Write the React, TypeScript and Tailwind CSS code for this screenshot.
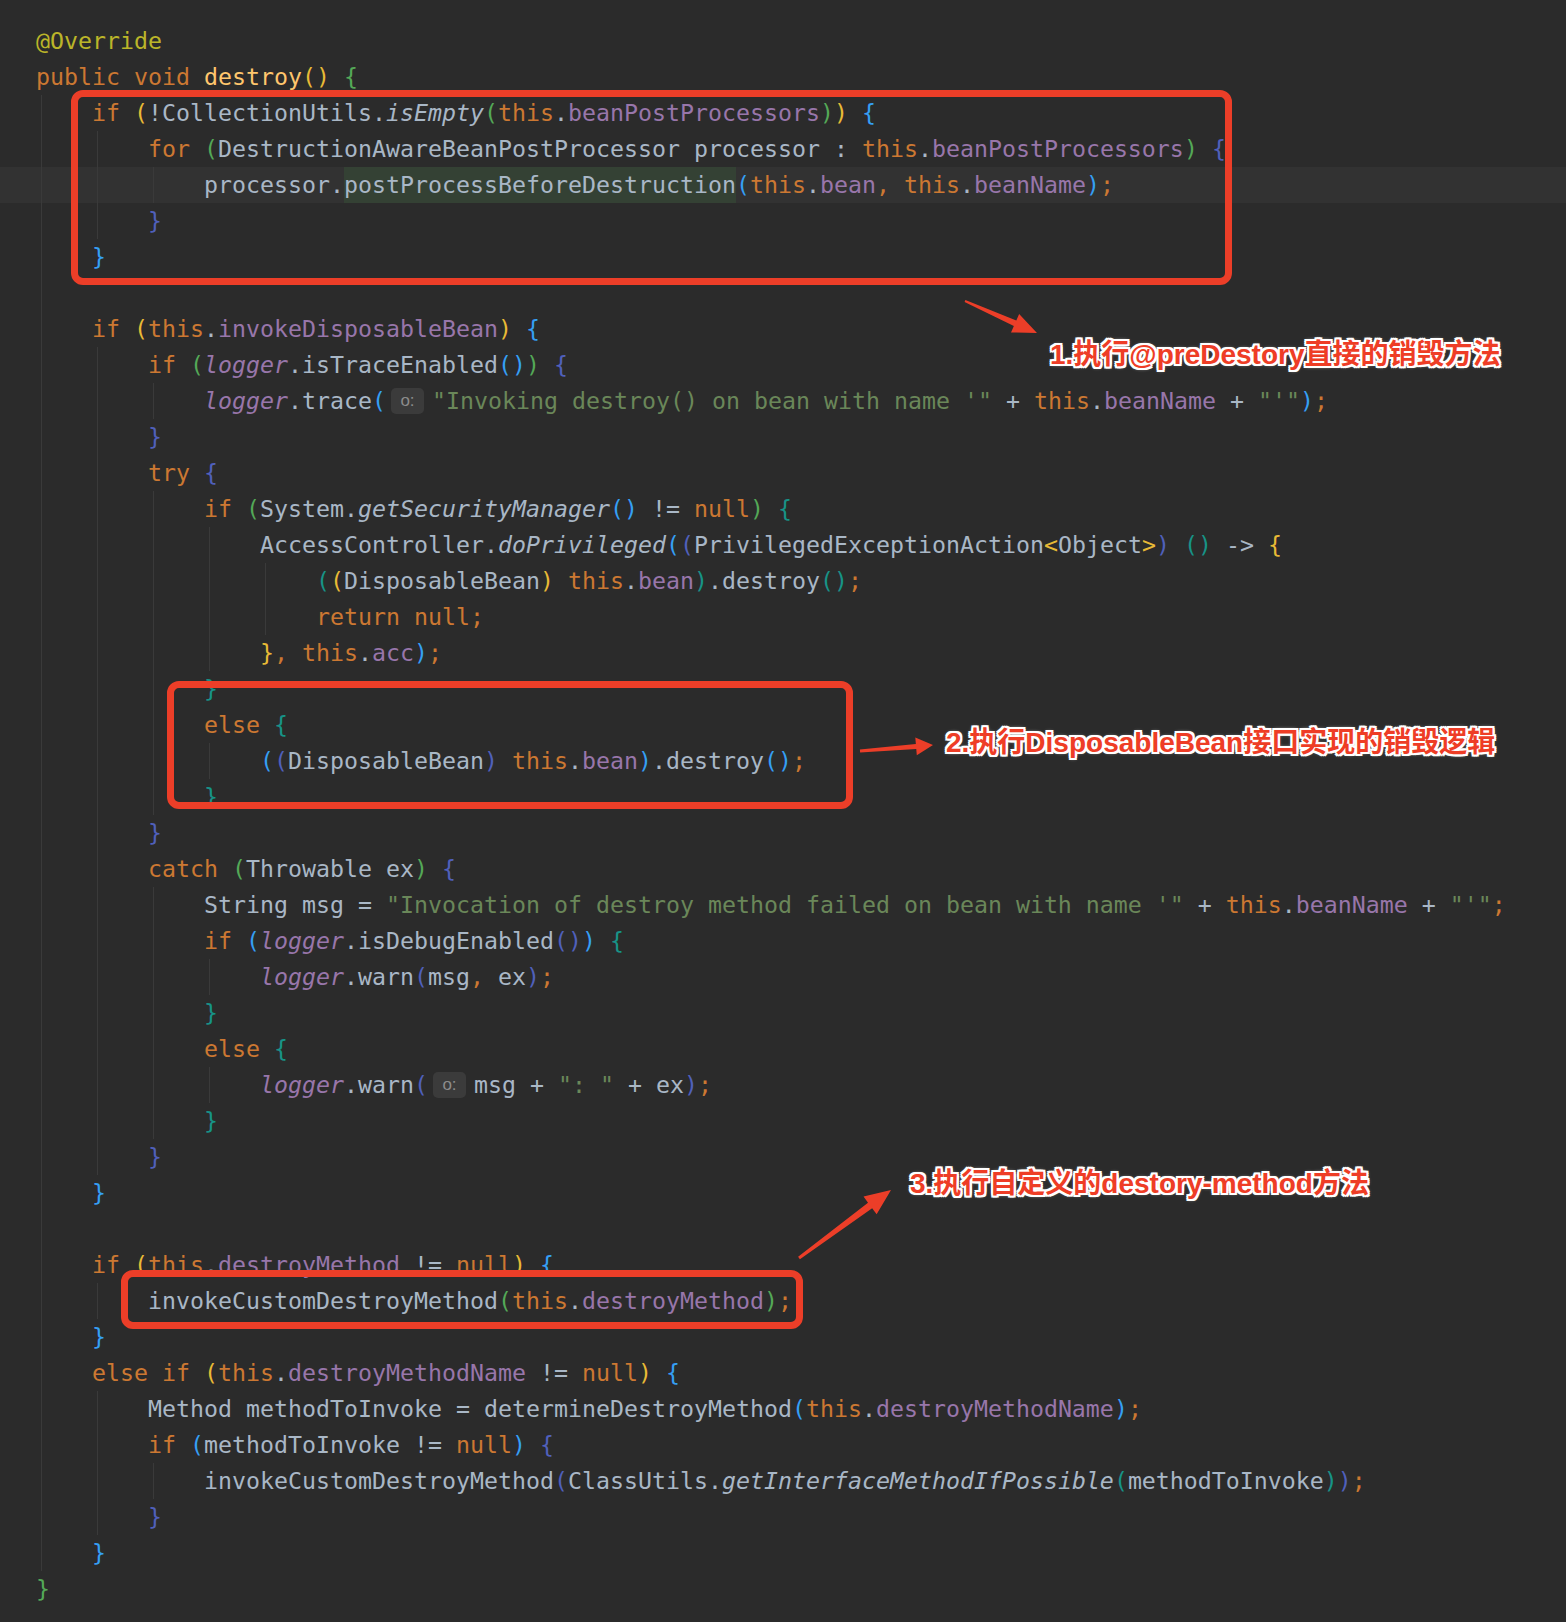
import React from "react";

type Tok = [string, string];

const tokClass: Record<string, string> = {
    p: "text-[#a9b7c6]",
    k: "text-[#cc7832]",
    f: "text-[#9876aa]",
    fi: "text-[#9876aa] italic",
    si: "text-[#a9b7c6] italic",
    s: "text-[#6a8759]",
    a: "text-[#bbb529]",
    m: "text-[#ffc66d]",
    Y: "text-[#e8ba36]",
    G: "text-[#54a857]",
    B: "text-[#359ff4]",
    I: "text-[#5060bb]",
    T: "text-[#179387]",
    hl: "text-[#a9b7c6] bg-[#344134]",
};

// [indent, tokens, current line?]
const lines: [number, Tok[], boolean?][] = [
    [0, [["a", "@Override"]]],
    [0, [["k", "public void "], ["m", "destroy"], ["Y", "()"], ["p", " "], ["G", "{"]]],
    [1, [["k", "if "], ["Y", "("], ["p", "!CollectionUtils."], ["si", "isEmpty"], ["G", "("], ["k", "this"], ["p", "."], ["f", "beanPostProcessors"], ["G", ")"], ["Y", ")"], ["p", " "], ["B", "{"]]],
    [2, [["k", "for "], ["G", "("], ["p", "DestructionAwareBeanPostProcessor processor : "], ["k", "this"], ["p", "."], ["f", "beanPostProcessors"], ["G", ")"], ["p", " "], ["I", "{"]]],
    [3, [["p", "processor."], ["hl", "postProcessBeforeDestruction"], ["B", "("], ["k", "this"], ["p", "."], ["f", "bean"], ["k", ", this"], ["p", "."], ["f", "beanName"], ["B", ")"], ["k", ";"]], true],
    [2, [["I", "}"]]],
    [1, [["B", "}"]]],
    [1, []],
    [1, [["k", "if "], ["Y", "("], ["k", "this"], ["p", "."], ["f", "invokeDisposableBean"], ["Y", ")"], ["p", " "], ["B", "{"]]],
    [2, [["k", "if "], ["G", "("], ["fi", "logger"], ["p", ".isTraceEnabled"], ["B", "()"], ["G", ")"], ["p", " "], ["I", "{"]]],
    [3, [["fi", "logger"], ["p", ".trace"], ["B", "("], ["hint", "o:"], ["s", "\"Invoking destroy() on bean with name '\""], ["p", " + "], ["k", "this"], ["p", "."], ["f", "beanName"], ["p", " + "], ["s", "\"'\""], ["B", ")"], ["k", ";"]]],
    [2, [["I", "}"]]],
    [2, [["k", "try "], ["I", "{"]]],
    [3, [["k", "if "], ["G", "("], ["p", "System."], ["si", "getSecurityManager"], ["B", "()"], ["p", " != "], ["k", "null"], ["G", ")"], ["p", " "], ["T", "{"]]],
    [4, [["p", "AccessController."], ["si", "doPrivileged"], ["B", "("], ["I", "("], ["p", "PrivilegedExceptionAction"], ["Y", "<"], ["p", "Object"], ["Y", ">"], ["I", ")"], ["p", " "], ["T", "()"], ["p", " -> "], ["Y", "{"]]],
    [5, [["T", "("], ["Y", "("], ["p", "DisposableBean"], ["Y", ")"], ["p", " "], ["k", "this"], ["p", "."], ["f", "bean"], ["T", ")"], ["p", ".destroy"], ["T", "()"], ["k", ";"]]],
    [5, [["k", "return null;"]]],
    [4, [["Y", "}"], ["k", ", this"], ["p", "."], ["f", "acc"], ["B", ")"], ["k", ";"]]],
    [3, [["T", "}"]]],
    [3, [["k", "else "], ["T", "{"]]],
    [4, [["B", "("], ["I", "("], ["p", "DisposableBean"], ["I", ")"], ["p", " "], ["k", "this"], ["p", "."], ["f", "bean"], ["B", ")"], ["p", ".destroy"], ["B", "()"], ["k", ";"]]],
    [3, [["T", "}"]]],
    [2, [["I", "}"]]],
    [2, [["k", "catch "], ["G", "("], ["p", "Throwable ex"], ["G", ")"], ["p", " "], ["I", "{"]]],
    [3, [["p", "String msg = "], ["s", "\"Invocation of destroy method failed on bean with name '\""], ["p", " + "], ["k", "this"], ["p", "."], ["f", "beanName"], ["p", " + "], ["s", "\"'\""], ["k", ";"]]],
    [3, [["k", "if "], ["B", "("], ["fi", "logger"], ["p", ".isDebugEnabled"], ["I", "()"], ["B", ")"], ["p", " "], ["T", "{"]]],
    [4, [["fi", "logger"], ["p", ".warn"], ["I", "("], ["p", "msg"], ["k", ", "], ["p", "ex"], ["I", ")"], ["k", ";"]]],
    [3, [["T", "}"]]],
    [3, [["k", "else "], ["T", "{"]]],
    [4, [["fi", "logger"], ["p", ".warn"], ["I", "("], ["hint", "o:"], ["p", "msg + "], ["s", "\": \""], ["p", " + ex"], ["I", ")"], ["k", ";"]]],
    [3, [["T", "}"]]],
    [2, [["I", "}"]]],
    [1, [["B", "}"]]],
    [1, []],
    [1, [["k", "if "], ["Y", "("], ["k", "this"], ["p", "."], ["f", "destroyMethod"], ["p", " != "], ["k", "null"], ["Y", ")"], ["p", " "], ["B", "{"]]],
    [2, [["p", "invokeCustomDestroyMethod"], ["G", "("], ["k", "this"], ["p", "."], ["f", "destroyMethod"], ["G", ")"], ["k", ";"]]],
    [1, [["B", "}"]]],
    [1, [["k", "else if "], ["Y", "("], ["k", "this"], ["p", "."], ["f", "destroyMethodName"], ["p", " != "], ["k", "null"], ["Y", ")"], ["p", " "], ["B", "{"]]],
    [2, [["p", "Method methodToInvoke = determineDestroyMethod"], ["B", "("], ["k", "this"], ["p", "."], ["f", "destroyMethodName"], ["B", ")"], ["k", ";"]]],
    [2, [["k", "if "], ["B", "("], ["p", "methodToInvoke != "], ["k", "null"], ["B", ")"], ["p", " "], ["I", "{"]]],
    [3, [["p", "invokeCustomDestroyMethod"], ["I", "("], ["p", "ClassUtils."], ["si", "getInterfaceMethodIfPossible"], ["T", "("], ["p", "methodToInvoke"], ["T", ")"], ["I", ")"], ["k", ";"]]],
    [2, [["I", "}"]]],
    [1, [["B", "}"]]],
    [0, [["G", "}"]]],
];

function CodeLine({ indent, tokens, current }: { indent: number; tokens: Tok[]; current?: boolean }) {
    return (
        <div className={`flex h-[36px] pl-[36px] whitespace-pre leading-[36px] ${current ? "bg-[#323232]" : ""}`}>
            {Array.from({ length: indent }).map((_, i) => (
                <span key={i} className="w-[56px] shrink-0 h-full pl-[5px]">
                    <span className="block h-full w-px bg-[#3a3a3a]" />
                </span>
            ))}
            {tokens.map(([type, text], i) =>
                type === "hint" ? (
                    <span
                        key={i}
                        className="self-center ml-[5px] mr-[8px] h-[26px] w-[33px] rounded-[5px] bg-[#3b3b3b] text-[#8c8c8c] text-[17px] leading-[26px] text-center font-['Liberation_Sans',sans-serif]"
                    >
                        {text}
                    </span>
                ) : (
                    <span key={i} className={tokClass[type]}>
                        {text}
                    </span>
                )
            )}
        </div>
    );
}

function arrowPoints(x1: number, y1: number, x2: number, y2: number, headLen: number, headW: number, tailW: number, shaftW: number) {
    const len = Math.hypot(x2 - x1, y2 - y1);
    const ux = (x2 - x1) / len;
    const uy = (y2 - y1) / len;
    const nx = -uy;
    const ny = ux;
    const bx = x2 - ux * headLen;
    const by = y2 - uy * headLen;
    const pts = [
        [x1 + (nx * tailW) / 2, y1 + (ny * tailW) / 2],
        [bx + (nx * shaftW) / 2, by + (ny * shaftW) / 2],
        [bx + (nx * headW) / 2, by + (ny * headW) / 2],
        [x2, y2],
        [bx - (nx * headW) / 2, by - (ny * headW) / 2],
        [bx - (nx * shaftW) / 2, by - (ny * shaftW) / 2],
        [x1 - (nx * tailW) / 2, y1 - (ny * tailW) / 2],
    ];
    return pts.map((p) => p.join(",")).join(" ");
}

const labelCls =
    "absolute whitespace-nowrap font-bold text-[28px] leading-[36px] text-[#ee3d26] font-['Liberation_Sans','Noto_Sans_CJK_SC',sans-serif] [text-shadow:2px_0_0_#fff,-2px_0_0_#fff,0_2px_0_#fff,0_-2px_0_#fff,2px_2px_0_#fff,-2px_-2px_0_#fff,2px_-2px_0_#fff,-2px_2px_0_#fff,0_0_4px_#fff]";

export default function App() {
    return (
        <div className="relative w-[1566px] min-h-[1622px] bg-[#2b2b2b] pt-[23px] overflow-hidden font-['DejaVu_Sans_Mono',monospace] text-[23.25px]">
            {lines.map(([indent, tokens, current], i) => (
                <CodeLine key={i} indent={indent} tokens={tokens} current={current} />
            ))}

            {/* annotation boxes, drawn over the code */}
            <div className="absolute left-[71px] top-[90px] w-[1161px] h-[195px] border-[7px] border-[#ec3e28] rounded-[12px]" />
            <div className="absolute left-[167px] top-[681px] w-[686px] h-[128px] border-[7px] border-[#ec3e28] rounded-[12px]" />
            <div className="absolute left-[121px] top-[1270px] w-[682px] h-[59px] border-[7px] border-[#ec3e28] rounded-[12px]" />

            {/* arrows */}
            <svg className="absolute inset-0 pointer-events-none" width="1566" height="1622">
                <polygon points={arrowPoints(965, 301, 1037, 333, 24, 20, 2, 6)} fill="#ec3e28" />
                <polygon points={arrowPoints(860, 751, 933, 745, 17, 18, 3, 5)} fill="#ec3e28" />
                <polygon points={arrowPoints(799, 1258, 891, 1190, 26, 22, 3, 7)} fill="#ec3e28" />
            </svg>

            {/* labels */}
            <div className={`${labelCls} left-[1050px] top-[337px]`}>1.执行@preDestory直接的销毁方法</div>
            <div className={`${labelCls} left-[946px] top-[725px]`}>2.执行DisposableBean接口实现的销毁逻辑</div>
            <div className={`${labelCls} left-[910px] top-[1166px]`}>3.执行自定义的destory-method方法</div>
        </div>
    );
}
